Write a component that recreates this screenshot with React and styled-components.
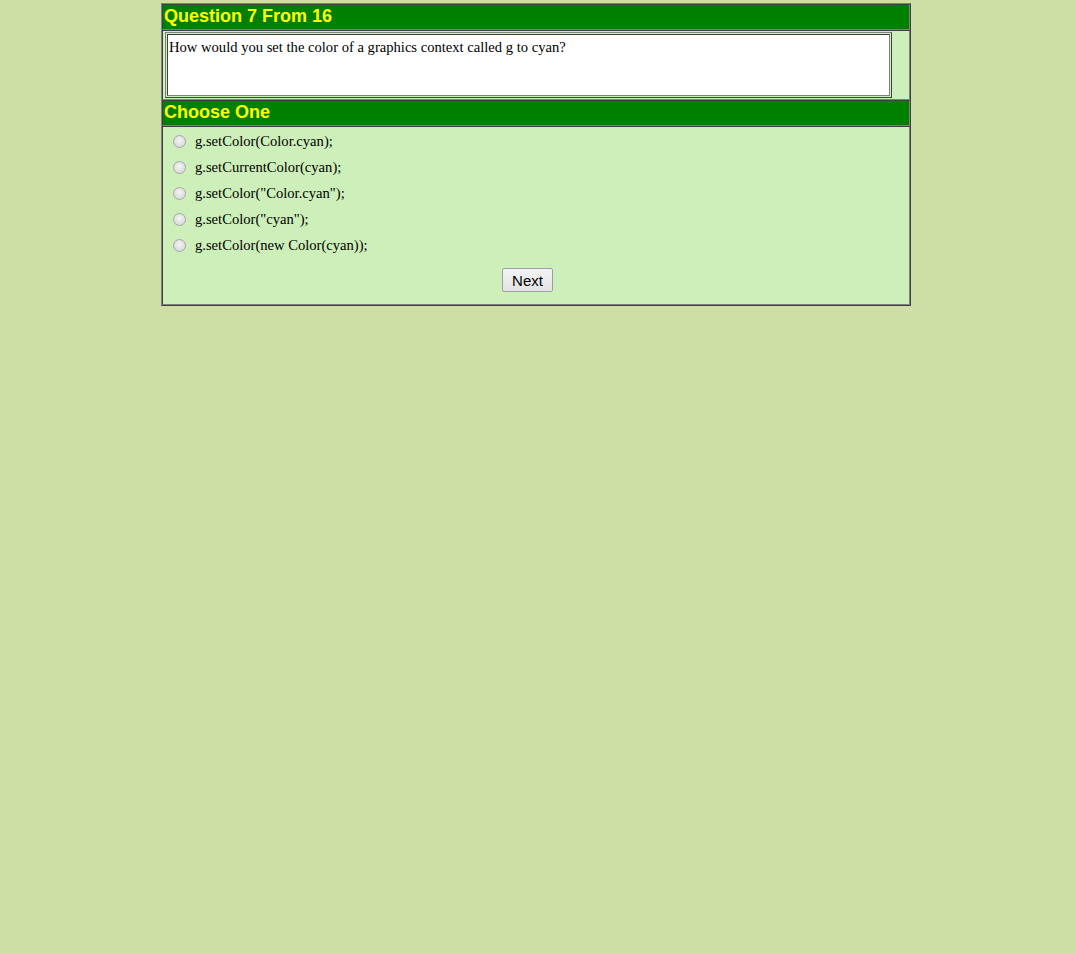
import React, { useState } from 'react';
import styled, { createGlobalStyle } from 'styled-components';

const GlobalStyle = createGlobalStyle`
  html, body {
    margin: 0;
    padding: 0;
    background: #cedfa5;
  }
  body {
    font-family: "Liberation Serif", "Times New Roman", serif;
  }
`;

const options = [
    'g.setColor(Color.cyan);',
    'g.setCurrentColor(cyan);',
    'g.setColor("Color.cyan");',
    'g.setColor("cyan");',
    'g.setColor(new Color(cyan));',
];

function App() {
    const [picked, setPicked] = useState(null);

    return (
        <>
            <GlobalStyle />
            <QuizStyled>
                <div className="header">Question 7 From 16</div>
                <div className="question-cell">
                    <div className="question-frame">
                        <div className="question-text">
                            How would you set the color of a graphics context called g to cyan?
                        </div>
                    </div>
                </div>
                <div className="header">Choose One</div>
                <div className="answers">
                    {options.map((opt, i) => (
                        <label className="option" key={i}>
                            <input
                                type="radio"
                                name="answer"
                                checked={picked === i}
                                onChange={() => setPicked(i)}
                            />
                            <span>{opt}</span>
                        </label>
                    ))}
                    <div className="actions">
                        <button className="next-btn">Next</button>
                    </div>
                </div>
            </QuizStyled>
        </>
    );
}

const QuizStyled = styled.div`
    width: 748px;
    margin: 3px 0 0 161px;
    border: 1px solid;
    border-color: #808080 #404040 #404040 #808080;
    background: #cdefb9;

    .header {
        height: 24px;
        border: 1px solid;
        border-color: #404040 #808080 #808080 #404040;
        background: #008000;
        color: #ffff00;
        font-family: "Liberation Sans", Arial, sans-serif;
        font-weight: bold;
        font-size: 18px;
        line-height: 23px;
        padding-left: 1px;
    }

    .question-cell {
        height: 66px;
        border: 1px solid;
        border-color: #404040 #808080 #808080 #404040;
        padding: 1px 2px;

        .question-frame {
            width: 723px;
            padding: 1px;
            border: 1px solid;
            border-color: #808080 #404040 #404040 #808080;
        }

        .question-text {
            height: 56px;
            background: #ffffff;
            border: 1px solid;
            border-color: #404040 #808080 #808080 #404040;
            padding: 3px 1px 1px;
            font-size: 14.6px;
            line-height: 19px;
            color: #000;
        }
    }

    .answers {
        border: 1px solid;
        border-color: #404040 #808080 #808080 #404040;
        padding: 1px 0 12px 0;

        .option {
            display: flex;
            align-items: center;
            height: 26px;
            padding-left: 10px;
            font-size: 14.6px;
            color: #000;
            cursor: pointer;

            input {
                appearance: none;
                width: 13px;
                height: 13px;
                margin: 0 9px 0 0;
                border-radius: 50%;
                border: 1px solid #a8a8a8;
                background: radial-gradient(circle at 50% 40%, #f4f4f4 0%, #dcdcdc 70%, #cfcfcf 100%);
                cursor: pointer;

                &:checked {
                    background: radial-gradient(circle, #333 0 3px, #f0f0f0 3.5px);
                }
            }
        }

        .actions {
            display: flex;
            justify-content: center;
            padding: 10px 17px 0 0;
        }

        .next-btn {
            height: 24px;
            padding: 0 9px;
            font-family: "Liberation Sans", Arial, sans-serif;
            font-size: 15px;
            color: #000;
            background: linear-gradient(#f3f3f3, #e3e3e3);
            border: 1px solid #a0a0a0;
            border-radius: 2px;
            cursor: pointer;
        }
    }
`;

export default App;
